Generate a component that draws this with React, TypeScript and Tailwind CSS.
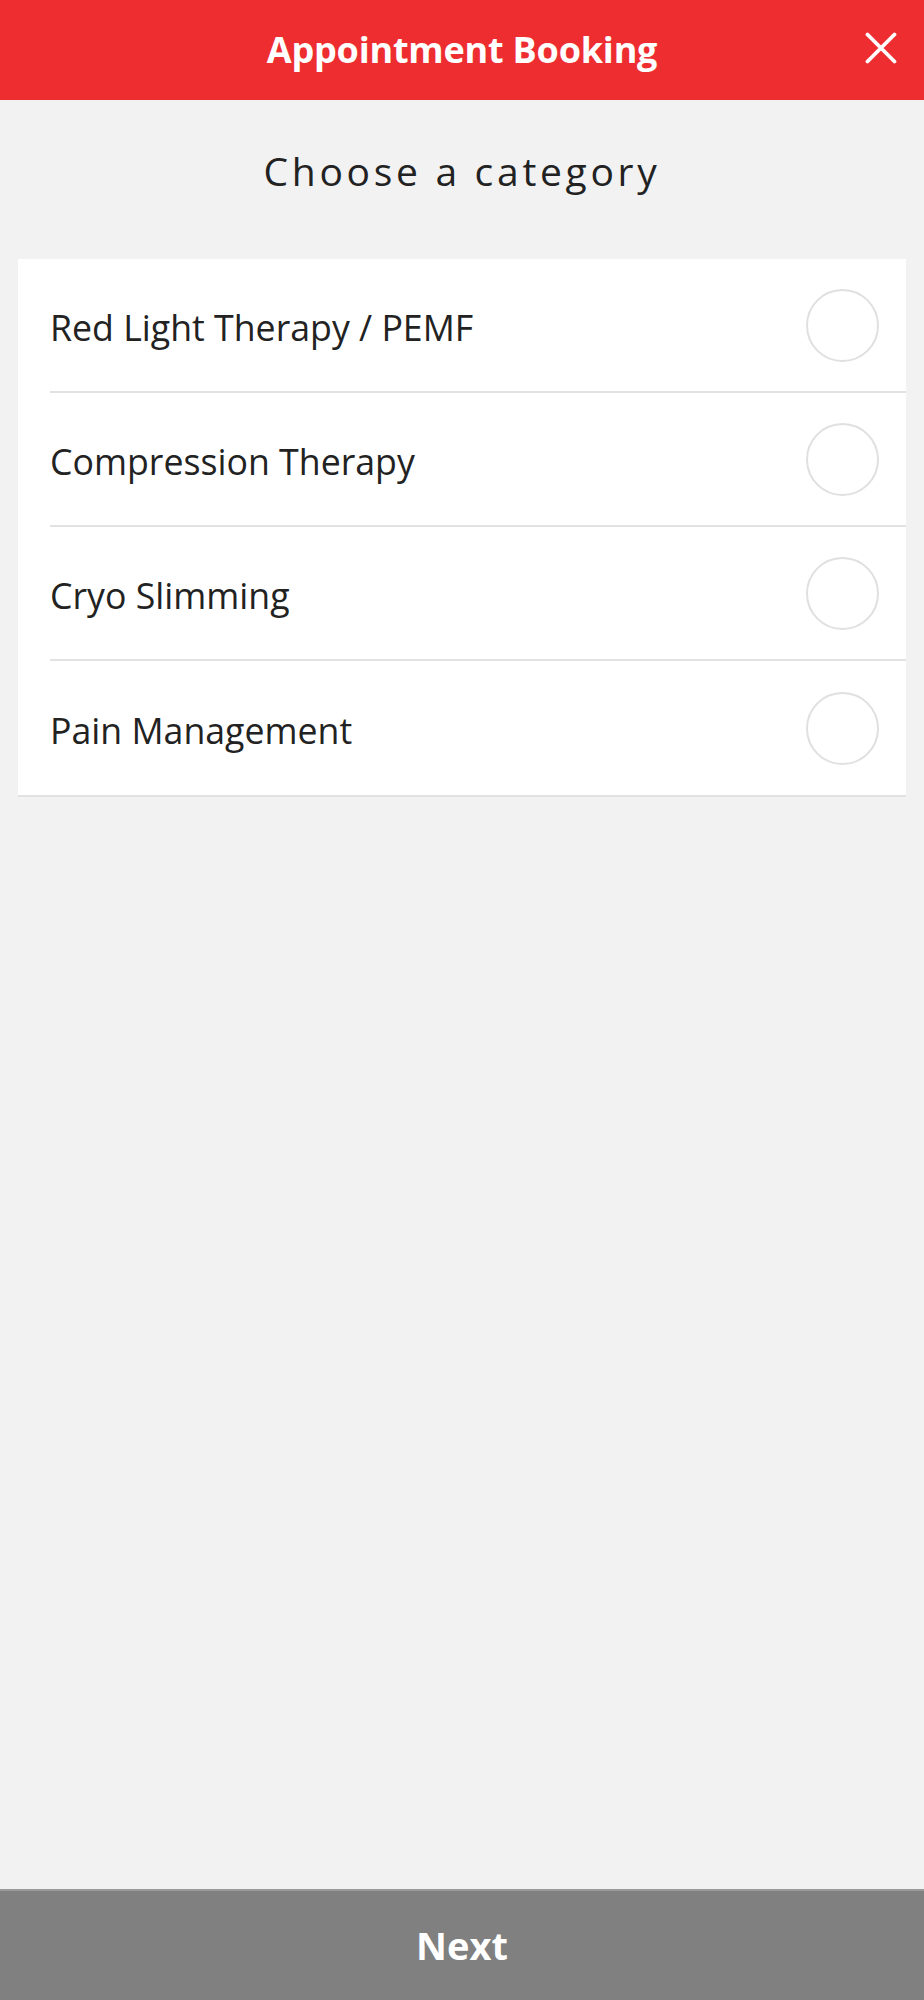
import { useState } from 'react';

// ── Data ──────────────────────────────────────────────────────
const CATEGORIES = [
  'Red Light Therapy / PEMF',
  'Compression Therapy',
  'Cryo Slimming',
  'Pain Management',
];

const FONT = { fontFamily: '"Open Sans", "Liberation Sans", sans-serif' };

export default function App() {
  const [selected, setSelected] = useState<number | null>(null);

  return (
    <div className="min-h-[2000px] flex flex-col bg-[#f2f2f2]" style={FONT}>
      {/* Header */}
      <header className="relative h-[100px] shrink-0 bg-[#ee2d31] flex items-center justify-center">
        <h1 className="text-white text-[36px] font-bold leading-none tracking-[-0.2px]">
          Appointment Booking
        </h1>
        <button className="absolute right-[27px] top-[32px] w-[32px] h-[32px] flex items-center justify-center" aria-label="Close">
          <svg width="32" height="32" viewBox="0 0 32 32" fill="none">
            <path d="M2.5 2.5 L29.5 29.5 M29.5 2.5 L2.5 29.5" stroke="white" strokeWidth="3.8" strokeLinecap="round" />
          </svg>
        </button>
      </header>

      {/* Content */}
      <main className="flex-1">
        <h2 className="pt-[47px] text-center text-[39px] leading-[48px] tracking-[3.7px] text-[#222]">
          Choose a category
        </h2>

        <div className="mt-[64px] mx-[18px] bg-white border-b-2 border-[#e2e2e2]">
          {CATEGORIES.map((label, i) => (
            <button
              key={label}
              onClick={() => setSelected(i)}
              className="w-full pl-[32px] block text-left"
            >
              <div
                className={
                  'h-[134px] flex items-center justify-between pr-[27px] ' +
                  (i < CATEGORIES.length - 1 ? 'border-b-2 border-[#e2e2e2]' : '')
                }
              >
                <span className="pt-[5px] text-[35.7px] text-[#222]">{label}</span>
                <span
                  className={
                    'w-[73px] h-[73px] rounded-full border-2 shrink-0 ' +
                    (selected === i ? 'border-[#ee2d31] bg-[#ee2d31]' : 'border-[#e0e0e0] bg-white')
                  }
                />
              </div>
            </button>
          ))}
        </div>
      </main>

      {/* Footer button */}
      <button className="h-[111px] shrink-0 bg-[#808080] border-t-2 border-[#9a9a9a] text-white text-[38px] font-bold">
        Next
      </button>
    </div>
  );
}
